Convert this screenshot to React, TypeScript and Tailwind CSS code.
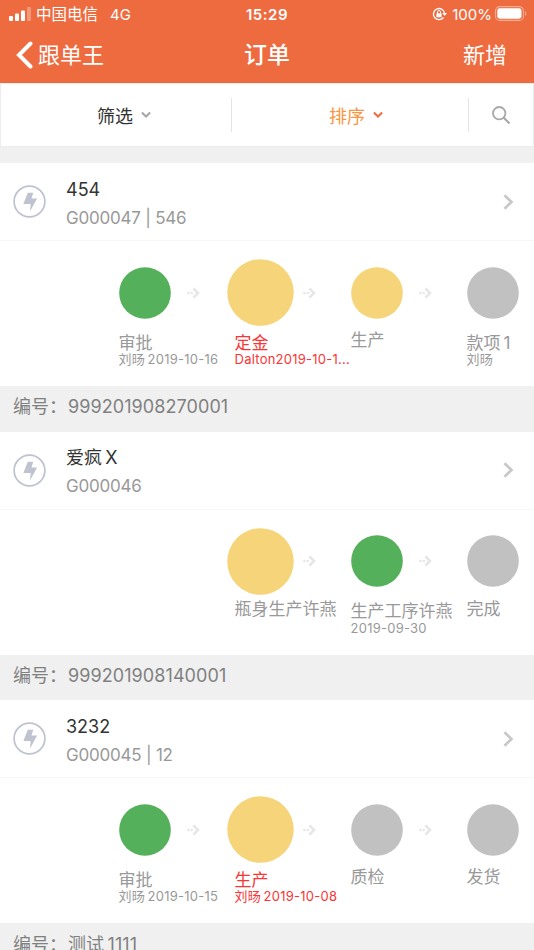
import { clsx } from "clsx";

type Step = {
  label: string;
  note?: string;
  status: "done" | "active" | "idle";
  current?: boolean;
  late?: boolean;
};

type Order = {
  name: string;
  code: string;
  steps: (Step | null)[];
  serial: string;
};

const orders: Order[] = [
  {
    name: "454",
    code: "G000047 | 546",
    steps: [
      { label: "审批", note: "刘旸\u20092019-10-16", status: "done" },
      { label: "定金", note: "Dalton2019-10-1...", status: "active", current: true, late: true },
      { label: "生产", status: "active" },
      { label: "款项\u20091", note: "刘旸", status: "idle" },
    ],
    serial: "999201908270001",
  },
  {
    name: "爱疯\u2009X",
    code: "G000046",
    steps: [
      null,
      { label: "瓶身生产许燕", status: "active", current: true },
      { label: "生产工序许燕", note: "2019-09-30", status: "done" },
      { label: "完成", status: "idle" },
    ],
    serial: "999201908140001",
  },
  {
    name: "3232",
    code: "G000045 | 12",
    steps: [
      { label: "审批", note: "刘旸\u20092019-10-15", status: "done" },
      { label: "生产", note: "刘旸\u20092019-10-08", status: "active", current: true, late: true },
      { label: "质检", status: "idle" },
      { label: "发货", status: "idle" },
    ],
    serial: "测试\u20091111",
  },
];

const statusFill = {
  done: "fill-[#55b05b]",
  active: "fill-[#f6d479]",
  idle: "fill-[#c1c1c1]",
};

const StatusBar = () => (
  <div className="grid h-[27px] grid-cols-3 items-center pl-[9px] pr-[7px] text-[15px] leading-none">
    <div className="flex items-center">
      <svg width="22" height="14" viewBox="0 0 22 14" fill="#fff">
        <rect x="0" y="9" width="4" height="5" rx="1" />
        <rect x="6" y="6.5" width="4" height="7.5" rx="1" />
        <rect x="12" y="3.5" width="4" height="10.5" rx="1" />
        <rect x="18" y="0" width="4" height="14" rx="1" opacity=".3" />
      </svg>
      <span className="ml-[5px] pt-[2px] text-[15.5px]">中国电信</span>
      <span className="ml-[12px] pt-px">4G</span>
    </div>
    <div className="pt-px text-center font-semibold tracking-[0.5px]">
      <span className="-ml-[2px]">15:29</span>
    </div>
    <div className="flex items-center justify-end">
      <svg width="16" height="14" viewBox="0 0 16 14" fill="none" stroke="#fff" strokeWidth="1.3">
        <path d="M11.6 10.3A5.6 5.6 0 1 1 12.6 7" />
        <path d="M10.2 6h4.8l-2.4 3z" fill="#fff" stroke="none" />
        <rect x="4.4" y="6.2" width="5.2" height="4" rx=".5" fill="#fff" stroke="none" />
        <path d="M5.5 6.5V5a1.5 1.5 0 0 1 3 0v1.5" strokeWidth="1" />
      </svg>
      <span className="ml-[4px] pt-px">100%</span>
      <svg className="ml-[3px]" width="32" height="15" viewBox="0 0 32 15" fill="none">
        <rect x=".6" y=".6" width="27.8" height="13.8" rx="4" stroke="#fff" strokeOpacity=".45" strokeWidth="1.1" />
        <rect x="2.3" y="2.3" width="24.2" height="10.4" rx="2.4" fill="#fff" />
        <path d="M30 5.2c1.6.6 1.6 4 0 4.6z" fill="#fff" fillOpacity=".5" />
      </svg>
    </div>
  </div>
);

const NavBar = () => (
  <div className="grid h-[56px] grid-cols-3 items-center pl-[16px] pr-[27px] text-[22px] leading-none">
    <div className="flex items-center">
      <svg width="17" height="28" viewBox="0 0 17 28" fill="none" stroke="#fff" strokeWidth="4" strokeLinecap="round" strokeLinejoin="miter">
        <path d="M14.5 2.5 3 14l11.5 11.5" />
      </svg>
      <span className="ml-[5px]">跟单王</span>
    </div>
    <div className="pl-[11px] text-center text-[23px] font-medium">订单</div>
    <div className="text-right">新增</div>
  </div>
);

const ChevronDown = ({ className }: { className?: string }) => (
  <svg className={className} width="10" height="8" viewBox="0 0 10 8" fill="none" stroke="currentColor" strokeWidth="2">
    <path d="m.9 1.5 4.1 4 4.1-4" />
  </svg>
);

const FilterBar = () => (
  <div className="flex h-[64px] items-center border border-[#ececec] bg-white text-[18px] leading-none">
    <div className="flex w-[230px] items-center justify-center pl-[16px]">
      <span className="pt-[3px] text-[#333]">筛选</span>
      <ChevronDown className="ml-[8px] text-[#a5a5a5]" />
    </div>
    <div className="h-[34px] w-px bg-[#e4e4e4]" />
    <div className="flex flex-1 items-center justify-center pl-[12px]">
      <span className="pt-[3px] text-[#fa9543]">排序</span>
      <ChevronDown className="ml-[8px] text-[#ed6b3e]" />
    </div>
    <div className="h-[34px] w-px bg-[#e4e4e4]" />
    <div className="flex w-[64px] justify-center">
      <svg width="18" height="18" viewBox="0 0 18 18" fill="none" stroke="#a8a8a8" strokeWidth="1.8">
        <circle cx="7.2" cy="7.2" r="6.2" />
        <path d="m11.5 11.5 6 6" strokeWidth="2.1" />
      </svg>
    </div>
  </div>
);

const StepItem = ({ step, last }: { step: Step; last: boolean }) => {
  const size = step.current ? 67 : 52;

  return (
    <div className="flex flex-col">
      <div className="flex h-[67px] items-center">
        <div className="flex w-[52px] shrink-0 justify-center">
          <svg className="shrink-0" width={size} height={size} viewBox="-1 -1 2 2">
            <circle r=".993" className={statusFill[step.status]} />
          </svg>
        </div>
        {!last && (
          <svg className="ml-[16px]" width="13" height="12" viewBox="0 0 13 12" fill="none" stroke="#e6e6e6">
            <path d="m6.4 1.4 4.6 4.6-4.6 4.6" strokeWidth="2.6" />
            <circle cx="1.4" cy="6" r="1.3" fill="#e6e6e6" stroke="none" />
            <circle cx="4.8" cy="6" r="1.3" fill="#e6e6e6" stroke="none" />
          </svg>
        )}
      </div>
      <div className={clsx("whitespace-nowrap", step.late ? "text-[#fb3434]" : "text-[#999]")}>
        <div className={clsx("text-[17px] leading-[20px]", step.note ? "mt-[6.5px]" : "mt-[4px]")}>{step.label}</div>
        {step.note && <div className="-mt-[0.5px] text-[13px] leading-[15px] tracking-[0.25px]">{step.note}</div>}
      </div>
    </div>
  );
};

const OrderCard = ({ order }: { order: Order }) => (
  <div>
    <div className="h-[223.3px] bg-white">
      <div className="flex h-[78px] items-center border-b border-[#f6f6f6] pl-[13px] pr-[20px]">
        <svg width="33" height="33" viewBox="0 0 33 33" fill="none">
          <circle cx="16.5" cy="16.5" r="15.4" stroke="#bfc2cf" strokeWidth="1.7" />
          <path d="M14.8 7.8h5.4l-1.7 5.8h5.6L17 26.4l.7-7.5h-7.3z" fill="#bfc2cf" />
        </svg>
        <div className="ml-[20px] flex-1 pt-[4px]">
          <div className="text-[18px] leading-[26px] text-[#333]">{order.name}</div>
          <div className="mt-[2px] text-[17px] leading-[26px] tracking-[-0.22px] text-[#999]">{order.code}</div>
        </div>
        <svg width="11" height="16" viewBox="0 0 11 16" fill="none" stroke="#c8c8c8" strokeWidth="2.7">
          <path d="m1.5 1.2 7 6.8-7 6.8" />
        </svg>
      </div>
      <div className="grid grid-cols-[repeat(4,116px)] pl-[118.5px] pt-[18px]">
        {order.steps.map((step, i) =>
          step ? <StepItem key={i} step={step} last={i === order.steps.length - 1} /> : <div key={i} />,
        )}
      </div>
    </div>
    <div className="flex h-[45.25px] items-center pb-[4px] pl-[13px] text-[18px] text-[#808080]">
      <span>编号：</span>
      <span className="ml-[1px] tracking-[0.08px]">{order.serial}</span>
    </div>
  </div>
);

export default function App() {
  return (
    <div className="h-[950px] w-[534px] overflow-hidden bg-[#f0f0f0] font-['Inter','Noto_Sans_CJK_SC',sans-serif]">
      <header className="h-[83px] bg-[#ee6b40] text-white">
        <StatusBar />
        <NavBar />
      </header>
      <FilterBar />
      <main className="pt-[16px]">
        {orders.map((order) => (
          <OrderCard key={order.code} order={order} />
        ))}
      </main>
    </div>
  );
}
